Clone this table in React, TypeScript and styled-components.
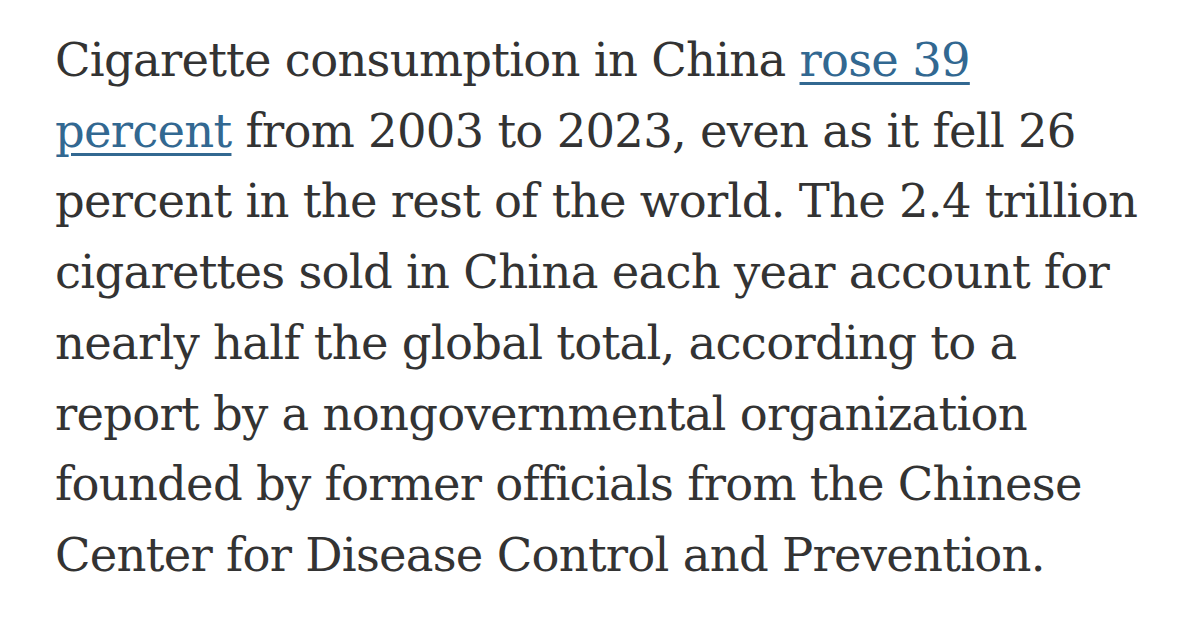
import React from "react";
import styled, { createGlobalStyle } from "styled-components";

const Global = createGlobalStyle`
  html, body { margin: 0; padding: 0; background: #ffffff; }
`;

const Page = styled.div`
  width: 1200px;
  height: 624px;
  box-sizing: border-box;
  padding: 25px 0 0 55px;
  background: #ffffff;
`;

const Paragraph = styled.p`
  margin: 0;
  font-family: "DejaVu Serif", "Liberation Serif", serif;
  font-size: 46.5px;
  line-height: 70.7px;
  letter-spacing: -0.75px;
  color: #333333;
  white-space: nowrap;
`;

const Link = styled.a`
  color: #326891;
  text-decoration: underline;
  text-decoration-color: #326891;
  text-decoration-thickness: 3px;
  text-underline-offset: 6px;
`;

export default function App() {
  return (
    <>
      <Global />
      <Page>
        <Paragraph>
          Cigarette consumption in China <Link href="#">rose 39</Link>
          <br />
          <Link href="#">percent</Link> from 2003 to 2023, even as it fell 26
          <br />
          percent in the rest of the world. The 2.4 trillion
          <br />
          cigarettes sold in China each year account for
          <br />
          nearly half the global total, according to a
          <br />
          report by a nongovernmental organization
          <br />
          founded by former officials from the Chinese
          <br />
          Center for Disease Control and Prevention.
        </Paragraph>
      </Page>
    </>
  );
}
